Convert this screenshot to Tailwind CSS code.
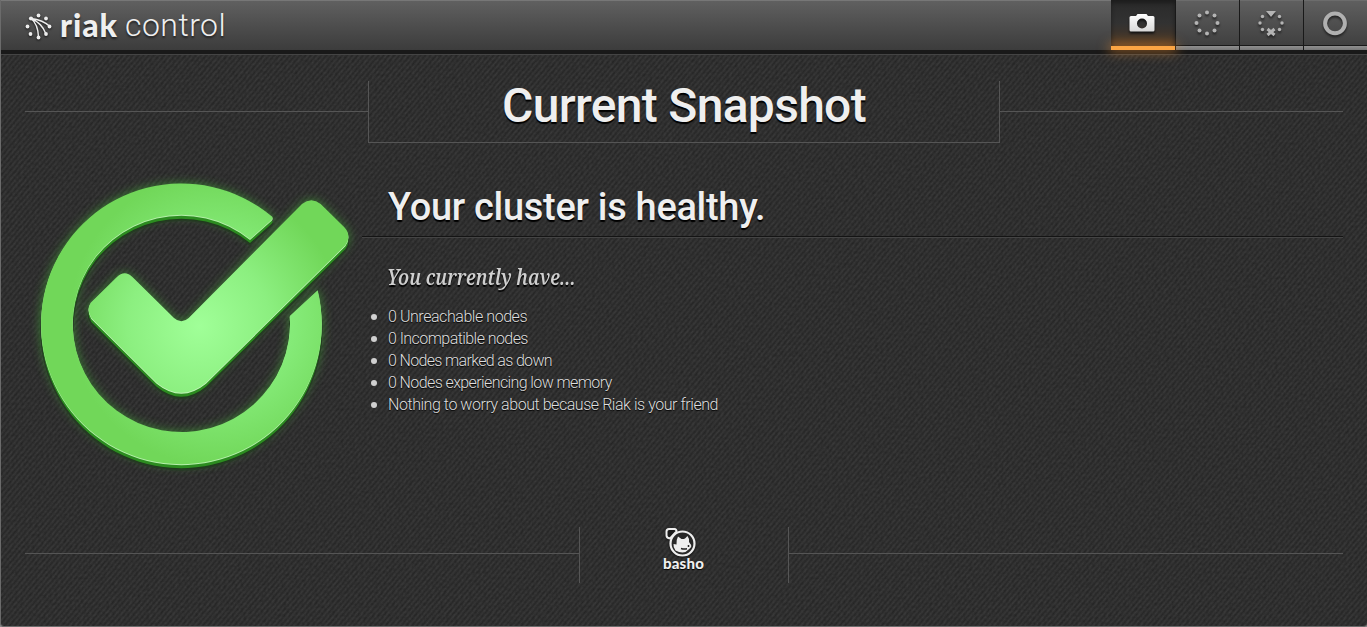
<!DOCTYPE html>
<html lang="en"><head><meta charset="utf-8"><title>Riak Control</title>
<script src="https://cdn.jsdelivr.net/npm/@tailwindcss/browser@4"></script></head>
<body class="bg-[#8a8a8a]">
<div class="relative isolate flex h-[627px] w-[1367px] flex-col overflow-hidden rounded-b-[4px] border-b border-l border-[#6b6b6b] bg-[#2e2e2e] bg-[repeating-linear-gradient(-50deg,#2b2b2b_0px,#3a3a3a_2px,#2b2b2b_4px)] font-['Roboto',sans-serif] text-[#efefef]">
<svg class="pointer-events-none absolute inset-0 -z-10 h-full w-full opacity-20" aria-hidden="true"><filter id="grain"><feTurbulence type="fractalNoise" baseFrequency=".35" numOctaves="2" seed="4"/><feColorMatrix values="0 0 0 0 0 0 0 0 0 0 0 0 0 0 0 1.6 0 0 0 -.5"/></filter><rect width="100%" height="100%" filter="url(#grain)"/></svg>

<header class="flex h-[55px] shrink-0 items-start border-b border-[#444] bg-[#191919]">
  <div class="flex h-[50px] flex-1 items-center border-t border-[#777] bg-linear-to-b from-[#606060] to-[#3c3c3c] pl-6">
    <svg class="mt-px h-7 w-7 drop-shadow-[0_1px_1px_#111]" viewBox="0 0 28 28" fill="#eee"><g fill="none" stroke="#eee" stroke-width="1.4"><path d="M6 6.500Q13 12 13.500 25M6 6.500Q17 11 21 22M6 6.500Q18 8 25 14.500"/></g><circle cx="6" cy="6.500" r="2.100"/><circle cx="13.500" cy="3.500" r="1.900"/><circle cx="21" cy="6.500" r="1.900"/><circle cx="24.500" cy="14.500" r="1.900"/><circle cx="21" cy="22" r="1.900"/><circle cx="13.500" cy="25.500" r="1.900"/><circle cx="5.500" cy="22" r="1.900"/><circle cx="2.500" cy="14.500" r="1.900"/></svg>
    <div class="-mt-0.5 ml-[7px] flex text-[32px] leading-none whitespace-nowrap text-shadow-[0_2px_2px_#222]"><b class="w-[65px] font-['Lato',sans-serif] font-black tracking-[0.9px]">riak</b><span class="font-light tracking-[0.45px]">control</span></div>
  </div>
  <nav class="flex h-[50px] bg-[#191919]">
    <a class="z-10 flex h-[50px] w-[64px] flex-col">
      <span class="flex h-[46px] items-center justify-center bg-linear-to-b from-[#2a2a2a] via-[#323232] to-[#4a3623] pr-0.5 shadow-[inset_0_3px_4px_#1c1c1c]">
        <svg class="h-[26px] w-[32px] drop-shadow-[0_2px_1px_#111]" viewBox="0 0 32 26"><defs><linearGradient id="cam" x2="0" y2="1"><stop stop-color="#fff"/><stop offset="1" stop-color="#d8d8d8"/></linearGradient></defs><path fill="url(#cam)" fill-rule="evenodd" d="M5 6h5l1.500-2h9L22 6h5q1.500 0 1.500 1.500V20q0 1.500-1.500 1.500H5Q3.500 21.500 3.500 20V7.500Q3.500 6 5 6ZM16 8.500a5 5 0 1 0 0 10a5 5 0 1 0 0-10Z"/></svg>
      </span>
      <span class="h-1 bg-[#fba544] shadow-[0_0_12px_2px_rgba(251,150,50,.55)]"></span>
    </a>
    <a class="flex w-[64px] flex-col border-l border-[#191919]">
      <span class="flex h-[45px] items-center justify-center border-t border-[#6c6c6c] bg-linear-to-b from-[#5f5f5f] to-[#404040] pr-0.5">
        <svg class="h-[28px] w-[28px] drop-shadow-[0_2px_1px_#222]" viewBox="0 0 28 28" fill="#b4b4b4"><circle cx="14" cy="3.500" r="2"/><circle cx="21.500" cy="6.500" r="2"/><circle cx="24.500" cy="14" r="2"/><circle cx="21.500" cy="21.500" r="2"/><circle cx="14" cy="24.500" r="2"/><circle cx="6.500" cy="21.500" r="2"/><circle cx="3.500" cy="14" r="2"/><circle cx="6.500" cy="6.500" r="2"/></svg>
      </span>
      <span class="mt-px h-1 bg-linear-to-b from-[#909090] to-[#777]"></span>
    </a>
    <a class="flex w-[64px] flex-col border-l border-[#191919]">
      <span class="flex h-[45px] items-center justify-center border-t border-[#6c6c6c] bg-linear-to-b from-[#5f5f5f] to-[#404040] pr-0.5">
        <svg class="h-[28px] w-[28px] drop-shadow-[0_2px_1px_#222]" viewBox="0 0 28 28" fill="#b4b4b4"><path d="M9 2h10l-5 6Z"/><path stroke="#b4b4b4" stroke-width="3" d="M10.500 20l7 6M17.500 20l-7 6"/><circle cx="22.500" cy="7.500" r="1.700"/><circle cx="25" cy="14" r="1.700"/><circle cx="22.500" cy="20.500" r="1.700"/><circle cx="5.500" cy="20.500" r="1.700"/><circle cx="3" cy="14" r="1.700"/><circle cx="5.500" cy="7.500" r="1.700"/></svg>
      </span>
      <span class="mt-px h-1 bg-linear-to-b from-[#909090] to-[#777]"></span>
    </a>
    <a class="flex w-[64px] flex-col border-l border-[#191919]">
      <span class="flex h-[45px] items-center justify-center border-t border-[#6c6c6c] bg-linear-to-b from-[#5f5f5f] to-[#404040] pr-0.5">
        <svg class="h-[28px] w-[28px] drop-shadow-[0_2px_1px_#222]" viewBox="0 0 28 28" fill="none" stroke="#b0b0b0" stroke-width="4"><circle cx="14" cy="14.300" r="9.900"/></svg>
      </span>
      <span class="mt-px h-1 bg-linear-to-b from-[#909090] to-[#777]"></span>
    </a>
  </nav>
</header>

<main class="px-6 pt-[26px]">
  <div class="flex h-[62px] items-start">
    <hr class="mt-[30px] flex-1 border-[#555]">
    <h1 class="flex h-full w-[632px] justify-center border-x border-b border-[#555] text-[48px] leading-[50px] font-medium tracking-[-0.7px] text-shadow-[0_2px_1px_#000]">Current Snapshot</h1>
    <hr class="mt-[30px] flex-1 border-[#555]">
  </div>

  <section class="flex">
    <div class="-ml-[5px] w-[342px] shrink-0 pt-[28px]">
      <svg class="h-[310px] w-[350px] max-w-none overflow-visible" viewBox="2 3 1050 930">
        <defs>
          <radialGradient id="leaf" gradientUnits="userSpaceOnUse" cx="540" cy="470" r="430"><stop stop-color="#a0ff98"/><stop offset=".5" stop-color="#8cef80"/><stop offset="1" stop-color="#71d759"/></radialGradient>
          <radialGradient id="band" gradientUnits="userSpaceOnUse" cx="590" cy="450" r="440"><stop offset=".5" stop-color="#86ec7a"/><stop offset="1" stop-color="#71d759"/></radialGradient>
          <filter id="halo" x="-20%" y="-20%" width="140%" height="140%"><feGaussianBlur stdDeviation="15"/></filter>
          <path id="ring" d="M755 139.500Q764 145 757 151L692 209.300A326 326 0 1 0 811.300 440L895 363A421 421 0 1 1 755 139.500Z"/>
          <path id="tick" d="M340 324L464 446Q486 466 508 446L848 104Q876 82 904 104L975 174Q998 200 978 228L560 640Q486 700 412 640L216 446Q200 420 214 400L292 324Q316 300 340 324Z"/>
        </defs>
        <g fill="#3f9a35" stroke="#3f9a35" stroke-width="10" filter="url(#halo)" opacity=".65"><use href="#ring"/><use href="#tick"/></g>
        <g>
          <use href="#ring" y="15" fill="#1f3a1c" stroke="#263a24" stroke-width="5"/>
          <use href="#ring" y="10" fill="#2c8c20"/>
          <use href="#ring" y="1" fill="#b5efaa"/>
          <use href="#ring" y="-2" fill="url(#band)"/>
        </g>
        <g>
          <use href="#tick" y="15" fill="#1f3a1c" stroke="#263a24" stroke-width="5"/>
          <use href="#tick" y="10" fill="#2c8c20"/>
          <use href="#tick" y="1" fill="#c4f5bb"/>
          <use href="#tick" y="-2" fill="url(#leaf)"/>
        </g>
      </svg>
    </div>
    <div class="h-[384px] flex-1">
      <h2 class="h-[94px] border-b border-[#141414] pt-[36px] pl-[26px] text-[38px] leading-[56px] font-medium tracking-[-0.3px] shadow-[0_1px_0_#444] text-shadow-[0_2px_1px_#000]">Your cluster is healthy.</h2>
      <h3 class="mt-[23px] ml-[25px] w-max origin-left scale-x-[.84] font-['Noto_Serif',serif] text-[22px] leading-[32px] font-semibold text-[#cfcfcf] italic text-shadow-[0_2px_1px_#000]">You currently have...</h3>
      <ul class="mt-[14px] ml-[26px] text-[16px] leading-[22px] font-light text-[#dedede] text-shadow-[0_1px_1px_#000]">
        <li class="flex items-center tracking-[-0.44px]"><i class="mr-[11px] -ml-[17px] h-1.5 w-1.5 rounded-full bg-[#d0d0d0]"></i>0 Unreachable nodes</li>
        <li class="flex items-center tracking-[-0.56px]"><i class="mr-[11px] -ml-[17px] h-1.5 w-1.5 rounded-full bg-[#d0d0d0]"></i>0 Incompatible nodes</li>
        <li class="flex items-center tracking-[-0.66px]"><i class="mr-[11px] -ml-[17px] h-1.5 w-1.5 rounded-full bg-[#d0d0d0]"></i>0 Nodes marked as down</li>
        <li class="flex items-center tracking-[-0.6px]"><i class="mr-[11px] -ml-[17px] h-1.5 w-1.5 rounded-full bg-[#d0d0d0]"></i>0 Nodes experiencing low memory</li>
        <li class="flex items-center tracking-[-0.45px]"><i class="mr-[11px] -ml-[17px] h-1.5 w-1.5 rounded-full bg-[#d0d0d0]"></i>Nothing to worry about because Riak is your friend</li>
      </ul>
    </div>
  </section>
</main>

<footer class="flex h-[56px] items-start px-6">
  <hr class="mt-[26px] flex-1 border-[#555]">
  <div class="flex h-full w-[210px] flex-col items-center border-x border-[#555] pr-px">
    <svg class="mr-[5px] h-[32px] w-[34px] shrink-0 drop-shadow-[0_1px_1px_#111]" viewBox="0 0 34 32"><path fill="#1b1b1b" stroke="#eee" stroke-width="2" d="M5 2h5.500q2 0 2 2.500L6 11.500Q2.500 11 2.500 8.500V4.500Q2.500 2 5 2Z"/><circle cx="18.500" cy="16.500" r="12" fill="#282828" stroke="#eee" stroke-width="2.200"/><path fill="#eee" d="M11.500 23.500Q9 20 9.500 17l3 .5Q12 13 14 9.500l3.500 2.500q2 .3 3.500-.5L23.500 9Q25.500 11.500 25 15q2.500 2.500 2.200 5l-2 2Q22 25.500 18.500 25.500T11.500 23.500Z"/><path fill="none" stroke="#222" stroke-width="1.500" d="M17 21.500q3 1 6 .3M24.500 18v2"/></svg>
    <span class="-mt-[5px] font-['Lato',sans-serif] text-[15px] leading-[18px] font-black tracking-[0.2px] text-shadow-[0_1px_1px_#000]">basho</span>
  </div>
  <hr class="mt-[26px] flex-1 border-[#555]">
</footer>
</div>
</body></html>
